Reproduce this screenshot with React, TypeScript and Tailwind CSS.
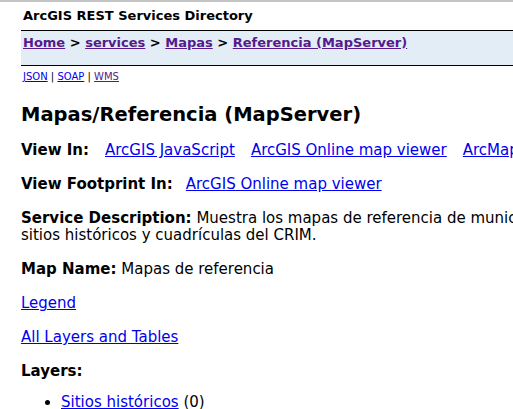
const linkCls = 'text-[#0000ee] underline';
const visitedCls = 'text-[#551a8b] underline';

function Field({ label, children }: { label: string; children: React.ReactNode }) {
  return (
    <p className="leading-[17px] mb-[17px]">
      <b>{label}</b> {children}
    </p>
  );
}

export default function App() {
  return (
    <div
      className="w-[513px] h-[409px] overflow-hidden bg-white text-black border-t-2 border-[#c4c4c4]"
      style={{ fontFamily: '"DejaVu Sans", Verdana, sans-serif' }}
    >
      <div className="w-[760px] pl-[21px] text-[15px]">
        {/* header */}
        <div className="pl-[2px] pt-[6px] pb-[6px] text-[13px] font-bold leading-[16px]">
          ArcGIS REST Services Directory
        </div>
        <div className="border-y border-black bg-[#e3edf6] h-[36px] pl-[2px] pt-[3px] text-[13px] font-bold leading-[17px]">
          <a className={visitedCls} href="#">Home</a> &gt;{' '}
          <a className={visitedCls} href="#">services</a> &gt;{' '}
          <a className={visitedCls} href="#">Mapas</a> &gt;{' '}
          <a className={visitedCls} href="#">Referencia (MapServer)</a>
        </div>
        <div className="pl-[2px] pt-[5px] text-[10px] leading-[12px]">
          <a className={linkCls} href="#">JSON</a> |{' '}
          <a className={linkCls} href="#">SOAP</a> |{' '}
          <a className={visitedCls} href="#">WMS</a>
        </div>

        <h2 className="text-[19.5px] font-bold leading-[24px] mt-[20px] mb-[15px]">
          Mapas/Referencia (MapServer)
        </h2>

        <p className="leading-[17px] mb-[17px] flex whitespace-nowrap">
          <b>View In:</b>
          <a className={`${linkCls} ml-[16px]`} href="#">ArcGIS JavaScript</a>
          <a className={`${linkCls} ml-[16px]`} href="#">ArcGIS Online map viewer</a>
          <a className={`${linkCls} ml-[16px]`} href="#">ArcMap</a>
        </p>

        <p className="leading-[17px] mb-[17px] flex whitespace-nowrap">
          <b>View Footprint In:</b>
          <a className={`${linkCls} ml-[13px]`} href="#">ArcGIS Online map viewer</a>
        </p>

        <Field label="Service Description:">
          Muestra los mapas de referencia de municipios, barrios, zonas,
          <br />
          sitios históricos y cuadrículas del CRIM.
        </Field>

        <Field label="Map Name:">Mapas de referencia</Field>

        <p className="leading-[17px] mb-[17px]">
          <a className={linkCls} href="#">Legend</a>
        </p>

        <p className="leading-[17px] mb-[17px]">
          <a className={linkCls} href="#">All Layers and Tables</a>
        </p>

        <p className="leading-[17px] mb-[14px] font-bold">Layers:</p>
        <ul className="list-disc pl-[40px] leading-[17px]">
          <li>
            <a className={linkCls} href="#">Sitios históricos</a> (0)
          </li>
        </ul>
      </div>
    </div>
  );
}
